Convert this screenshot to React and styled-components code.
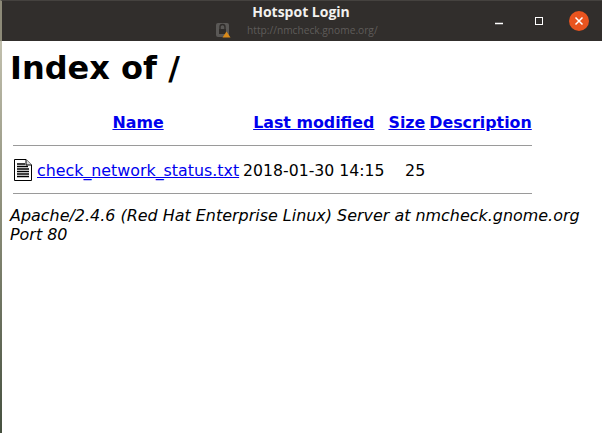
import styled, { createGlobalStyle } from 'styled-components';

const GlobalStyle = createGlobalStyle`
    html, body {
        margin: 0;
        padding: 0;
        background: #fff;
    }
`;

const Window = styled.div`
    width: 602px;
    height: 433px;
    overflow: hidden;
    display: flex;
    flex-direction: column;
    font-family: "DejaVu Sans", sans-serif;
    background: #fff;
`;

const TitleBar = styled.div`
    height: 41px;
    flex: none;
    display: flex;
    align-items: center;
    justify-content: flex-end;
    position: relative;
    background: #312e2c;
    border-left: 2px solid #8d8a78;
    border-top: 1px solid #45423f;
    box-sizing: border-box;
`;

const TitleBlock = styled.div`
    position: absolute;
    left: 213px;
    top: 0;
    width: 172px;
    display: flex;
    flex-direction: column;
    align-items: center;
`;

const Title = styled.div`
    margin-top: 2px;
    height: 18px;
    line-height: 18px;
    font-size: 14px;
    font-weight: 700;
    color: #f2f1ef;
    font-family: "Open Sans", sans-serif;
`;

const UrlRow = styled.div`
    display: flex;
    align-items: center;
    align-self: flex-start;
    margin-top: 1px;
    gap: 16px;
`;

const Url = styled.span`
    font-size: 10.2px;
    line-height: 14px;
    color: #5f5c5a;
    font-family: "Open Sans", sans-serif;
`;

const Controls = styled.div`
    display: flex;
    align-items: center;
    gap: 20px;
    padding-right: 13px;
`;

const WinButton = styled.div`
    width: 20px;
    height: 20px;
    display: flex;
    align-items: center;
    justify-content: center;
    border-radius: 50%;
    background: ${(p) => (p.$close ? '#e9541f' : 'transparent')};
`;

const Page = styled.div`
    flex: 1;
    padding: 0 10px;
    border-left: 2px solid;
    border-image: linear-gradient(#c2c0ae, #8a8c78 45%, #45503f) 1;
    color: #000;
    box-sizing: border-box;
`;

const Heading = styled.h1`
    margin: 5px 0 20px -2px;
    font-size: 32px;
    line-height: 44px;
    font-weight: 700;
`;

const ListTable = styled.table`
    border-collapse: separate;
    border-spacing: 2px;
    margin-left: -2px;
    font-size: 15.85px;
    line-height: 19px;
`;

const HeadCell = styled.th`
    padding: 1px;
    text-align: center;
    font-weight: 700;
`;

const Cell = styled.td`
    padding: 1px;
    text-align: ${(p) => p.$align || 'left'};
    white-space: nowrap;
`;

const DateCell = styled(Cell)`
    font-size: 15.7px;
`;

const RuleCell = styled.th`
    padding: 1px;
    font-weight: 400;
`;

const Rule = styled.hr`
    margin: ${(p) => (p.$head ? '9px 0' : '8px 0')};
    border: 0;
    height: 1px;
    background: #9a9a9a;
`;

const Link = styled.a`
    color: #0000ee;
    text-decoration: underline;
`;

const Address = styled.address`
    margin-top: 1px;
    margin-left: -2px;
    font-size: 15.95px;
    line-height: 19px;
    font-style: italic;
    width: 580px;
`;

const LockIcon = () => (
    <svg width="16" height="16" viewBox="0 0 16 16">
        <rect x="1" y="1" width="13" height="14" rx="2" fill="#5a5856" />
        <path d="M5 7V5a2.5 2.5 0 0 1 5 0v2" fill="none" stroke="#2f2c2a" strokeWidth="1.4" />
        <rect x="4" y="7" width="7" height="5" fill="#2f2c2a" />
        <path d="M11.5 9.5 15.5 15.5H7.5Z" fill="#d98a1a" />
    </svg>
);

const FileIcon = () => (
    <svg width="20" height="22" viewBox="0 0 20 22" style={{ display: 'block' }}>
        <path d="M1.5 .5H13L18.5 6V21.5H1.5Z" fill="#fff" stroke="#000" />
        <path d="M13 .5V6H18.5" fill="#ddd" stroke="#000" />
        <path d="M4 5H12M4 7.5H15M4 10H16M4 12.5H16M4 15H16M4 17.5H16" stroke="#000" strokeWidth="1.4" />
    </svg>
);

const MinimizeIcon = () => (
    <svg width="10" height="10" viewBox="0 0 10 10">
        <path d="M1 7.5H9" stroke="#fff" strokeWidth="1.5" />
    </svg>
);

const MaximizeIcon = () => (
    <svg width="10" height="10" viewBox="0 0 10 10">
        <rect x="1.5" y="1.5" width="7" height="7" fill="none" stroke="#fff" />
    </svg>
);

const CloseIcon = () => (
    <svg width="10" height="10" viewBox="0 0 10 10">
        <path d="M1.5 1.5 8.5 8.5M8.5 1.5 1.5 8.5" stroke="#fff" strokeWidth="1.5" />
    </svg>
);

export default function App() {
    return (
        <Window>
            <GlobalStyle />
            <TitleBar>
                <TitleBlock>
                    <Title>Hotspot Login</Title>
                    <UrlRow>
                        <LockIcon />
                        <Url>http://nmcheck.gnome.org/</Url>
                    </UrlRow>
                </TitleBlock>
                <Controls>
                    <WinButton><MinimizeIcon /></WinButton>
                    <WinButton><MaximizeIcon /></WinButton>
                    <WinButton $close><CloseIcon /></WinButton>
                </Controls>
            </TitleBar>
            <Page>
                <Heading>Index of /</Heading>
                <ListTable>
                    <thead>
                        <tr>
                            <HeadCell />
                            <HeadCell><Link href="#">Name</Link></HeadCell>
                            <HeadCell><Link href="#">Last modified</Link></HeadCell>
                            <HeadCell><Link href="#">Size</Link></HeadCell>
                            <HeadCell><Link href="#">Description</Link></HeadCell>
                        </tr>
                        <tr>
                            <RuleCell colSpan={5}><Rule $head /></RuleCell>
                        </tr>
                    </thead>
                    <tbody>
                        <tr>
                            <Cell><FileIcon /></Cell>
                            <Cell><Link href="#">check_network_status.txt</Link></Cell>
                            <DateCell>2018-01-30 14:15</DateCell>
                            <Cell $align="right">25</Cell>
                            <Cell>&nbsp;</Cell>
                        </tr>
                        <tr>
                            <RuleCell colSpan={5}><Rule /></RuleCell>
                        </tr>
                    </tbody>
                </ListTable>
                <Address>Apache/2.4.6 (Red Hat Enterprise Linux) Server at nmcheck.gnome.org Port 80</Address>
            </Page>
        </Window>
    );
}
